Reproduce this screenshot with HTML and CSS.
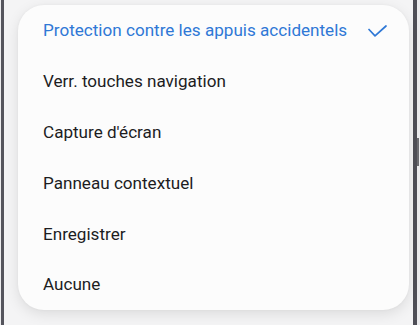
FILE: index.html
```html
<!DOCTYPE html>
<html lang="fr">
<head>
<meta charset="utf-8">
<link rel="stylesheet" href="styles.css">
</head>
<body>
<div class="phone">
  <div class="screen">
    <div class="menu">
      <div class="item selected">
        <span>Protection contre les appuis accidentels</span>
        <svg class="check" width="19" height="12" viewBox="0 0 19 12"><path d="M1 4.5 L7 10.8 L18 1" fill="none" stroke="#2f78d6" stroke-width="1.7" stroke-linecap="round" stroke-linejoin="round"/></svg>
      </div>
      <div class="item">Verr. touches navigation</div>
      <div class="item">Capture d'écran</div>
      <div class="item">Panneau contextuel</div>
      <div class="item">Enregistrer</div>
      <div class="item">Aucune</div>
    </div>
  </div>
  <div class="side-button"></div>
</div>
</body>
</html>
```

FILE: styles.css
```css
html, body {
  margin: 0;
  padding: 0;
  width: 420px;
  height: 325px;
  overflow: hidden;
  background: #ececee;
}
.phone {
  position: relative;
  margin-left: 1px;
  width: 409px;
  height: 325px;
  border-left: 3px solid #55555d;
  border-right: 4px solid #4f4f57;
  background: #f4f4f5;
}
.screen {
  padding: 5px 4px 0 14px;
}
.menu {
  background: #fcfcfc;
  border-radius: 26px;
  box-shadow: 0 4px 14px rgba(0, 0, 0, 0.10), 0 0 3px rgba(0, 0, 0, 0.04);
  padding: 0 22px 0 25px;
  font-family: Roboto, "Noto Sans", sans-serif;
  font-size: 17.1px;
  color: #1d1d1f;
}
.item {
  height: 50.8px;
  display: flex;
  align-items: center;
  justify-content: space-between;
}
.item.selected {
  color: #2f78d6;
}
.check {
  display: block;
  margin-top: 1px;
}
.side-button {
  position: absolute;
  right: -6px;
  top: 138px;
  width: 2px;
  height: 28px;
  background: #6b6b70;
}
```
